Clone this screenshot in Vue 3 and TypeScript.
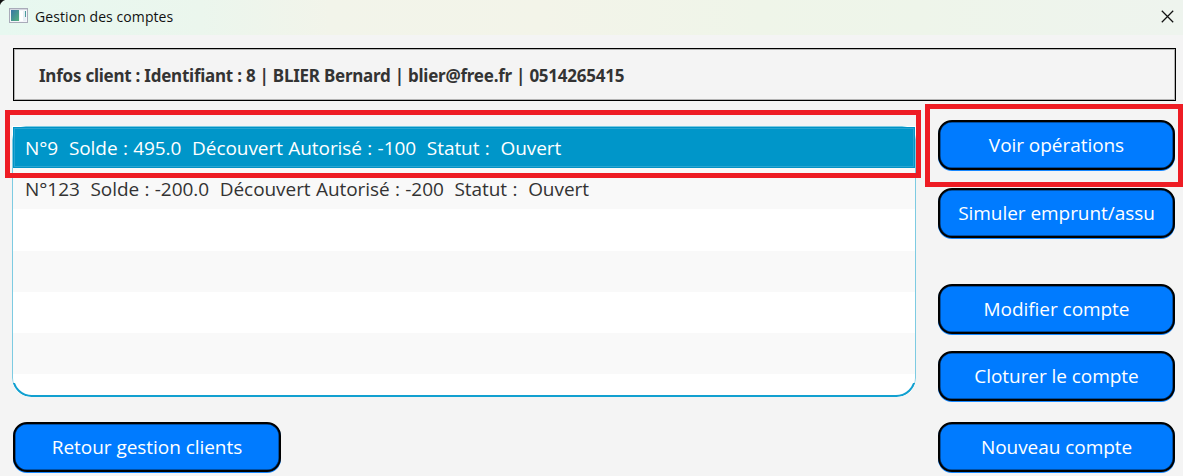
<script setup lang="ts">
interface Account {
  id: number
  balance: string
  overdraft: number
  status: string
}

const accounts: Account[] = [
  { id: 9, balance: '495.0', overdraft: -100, status: 'Ouvert' },
  { id: 123, balance: '-200.0', overdraft: -200, status: 'Ouvert' },
]

const describe = (a: Account): string =>
  `N°${a.id}  Solde : ${a.balance}  Découvert Autorisé : ${a.overdraft}  Statut :  ${a.status}`
</script>

<template>
  <div class="window">
    <header class="titlebar">
      <svg class="app-icon" width="20" height="17" viewBox="0 0 20 17">
        <rect x="0.5" y="0.5" width="18" height="14" fill="#f5f6fa" stroke="#a9abb9" />
        <rect x="1" y="1" width="17" height="1" fill="#d5d7e0" />
        <rect x="2" y="2" width="8" height="11" fill="url(#pane)" />
        <rect x="11" y="3" width="3" height="10" fill="#fff" />
        <rect x="14" y="3" width="3" height="10" fill="#e8f0f5" />
        <rect x="16" y="3" width="1" height="6" fill="#4b9b9b" />
        <defs>
          <linearGradient id="pane" x1="0" y1="0" x2="1" y2="1">
            <stop offset="0" stop-color="#3974a6" />
            <stop offset="1" stop-color="#54b27c" />
          </linearGradient>
        </defs>
      </svg>
      <span class="title">Gestion des comptes</span>
      <svg class="close" width="13" height="13" viewBox="0 0 13 13">
        <path d="M0.8 0.8L12.2 12.2M12.2 0.8L0.8 12.2" fill="none" stroke="#111" stroke-width="1.25" />
      </svg>
    </header>

    <section class="client">
      <span class="client-text">Infos client : Identifiant : 8 | BLIER Bernard | blier@free.fr | 0514265415</span>
    </section>

    <main class="content">
      <div class="left">
        <div class="list">
          <div v-for="(a, i) in accounts" :key="a.id" class="row" :class="{ selected: i === 0 }">
            <span class="row-text">{{ describe(a) }}</span>
          </div>
          <div v-for="n in 5" :key="'e' + n" class="row"></div>
          <div class="curve"></div>
        </div>
        <button class="btn back"><span>Retour gestion clients</span></button>
      </div>
      <nav class="actions">
        <button class="btn"><span>Voir opérations</span></button>
        <button class="btn simulate"><span>Simuler emprunt/assu</span></button>
        <button class="btn modify"><span>Modifier compte</span></button>
        <button class="btn closing"><span>Cloturer le compte</span></button>
        <button class="btn create"><span>Nouveau compte</span></button>
      </nav>
    </main>

    <div class="mark mark-row"></div>
    <div class="mark mark-button"></div>
  </div>
</template>

<style>
body {
  margin: 0;
  overflow: hidden;
}
</style>

<style scoped>
.window {
  position: relative;
  box-sizing: border-box;
  width: 1183px;
  height: 476px;
  overflow: hidden;
  background: #f4f4f4;
  font-family: "Open Sans", "Noto Sans", sans-serif;
}
.titlebar {
  display: flex;
  align-items: center;
  box-sizing: border-box;
  height: 35px;
  padding: 0 9px 3px 9px;
  background:
    radial-gradient(circle at 8px 8px, transparent 8px, #111 9px) 0 0 / 6px 6px no-repeat,
    linear-gradient(90deg, #e7f8f0 0, #ebf6ed 200px, #f2f4ea 330px, #f3f4e9 540px, #eff5e9 760px, #eef5ea 920px, #eef4ee 1183px);
}
.app-icon {
  flex: none;
  margin-right: 6px;
}
.title {
  padding-top: 1px;
  font-size: 14px;
  line-height: 20px;
  letter-spacing: 0.08px;
  color: #111;
  white-space: nowrap;
}
.close {
  margin-left: auto;
}
.client {
  display: flex;
  align-items: center;
  box-sizing: border-box;
  width: 1163px;
  height: 53px;
  margin: 13px 0 0 13px;
  padding: 2px 0 0 25px;
  border: 1px solid #000;
  box-shadow: inset 0 0 0 1px #b4b4b4;
}
.client-text {
  font-family: "Noto Sans", "Open Sans", sans-serif;
  font-size: 17px;
  font-weight: 700;
  line-height: 24px;
  letter-spacing: -0.24px;
  color: #333;
  white-space: pre;
}
.content {
  display: flex;
  justify-content: space-between;
  padding: 19px 8px 0 12px;
}
.left {
  display: flex;
  flex-direction: column;
  padding-top: 6px;
}
.list {
  position: relative;
  box-sizing: border-box;
  width: 904px;
  height: 271px;
  padding: 1px;
  overflow: hidden;
  border-radius: 0 0 19px 19px;
  background: #fff;
}
.list::before {
  content: "";
  position: absolute;
  inset: 0 0 1px;
  border: 1px solid #7dcbe2;
  border-radius: 14px 14px 18px 18px;
  pointer-events: none;
  z-index: 1;
}
.curve {
  position: absolute;
  left: 0;
  right: 0;
  bottom: 0;
  height: 14px;
  overflow: hidden;
  z-index: 2;
}
.curve::before {
  content: "";
  position: absolute;
  left: 0;
  right: 0;
  bottom: 0;
  height: 40px;
  box-sizing: border-box;
  border: 2px solid #12a0d0;
  border-radius: 20px;
}
.row {
  display: flex;
  align-items: center;
  box-sizing: border-box;
  height: 41.2px;
  padding-left: 12px;
  background: #fff;
  color: #333;
}
.row:nth-child(even) {
  background: #f9f9f9;
}
.row.selected {
  position: relative;
  z-index: 3;
  background: #0096c9;
  border: 1px solid #0093c6;
  box-shadow: inset 0 0 0 1px #28a5d1;
  padding-left: 11px;
  color: #fff;
}
.row-text {
  font-size: 19px;
  line-height: 26px;
  letter-spacing: -0.06px;
  word-spacing: 0.5px;
  white-space: pre;
}
.btn {
  display: flex;
  align-items: center;
  justify-content: center;
  box-sizing: border-box;
  width: 237px;
  height: 50px;
  margin: 0;
  padding: 0;
  border: 2px solid #000;
  border-radius: 14px;
  background: #007bff;
  box-shadow: 0 1px 0 #1687ff, inset 0 0 0 0.5px #00244d;
  color: #fff;
  font-family: inherit;
  font-size: 19px;
  line-height: 26px;
  letter-spacing: -0.05px;
}
.btn span {
  white-space: pre;
}
.back {
  width: 268px;
  margin: 25px 0 0 1px;
}
.actions {
  display: flex;
  flex-direction: column;
}
.simulate {
  margin-top: 18px;
}
.modify {
  margin-top: 46px;
}
.closing {
  margin-top: 17px;
}
.create {
  margin-top: 21px;
}
.mark {
  position: absolute;
  box-sizing: border-box;
  border: 5px solid #ee1c24;
  z-index: 5;
}
.mark-row {
  left: 5px;
  top: 110px;
  width: 916px;
  height: 68px;
}
.mark-button {
  left: 925px;
  top: 104px;
  width: 258px;
  height: 83px;
}
</style>
